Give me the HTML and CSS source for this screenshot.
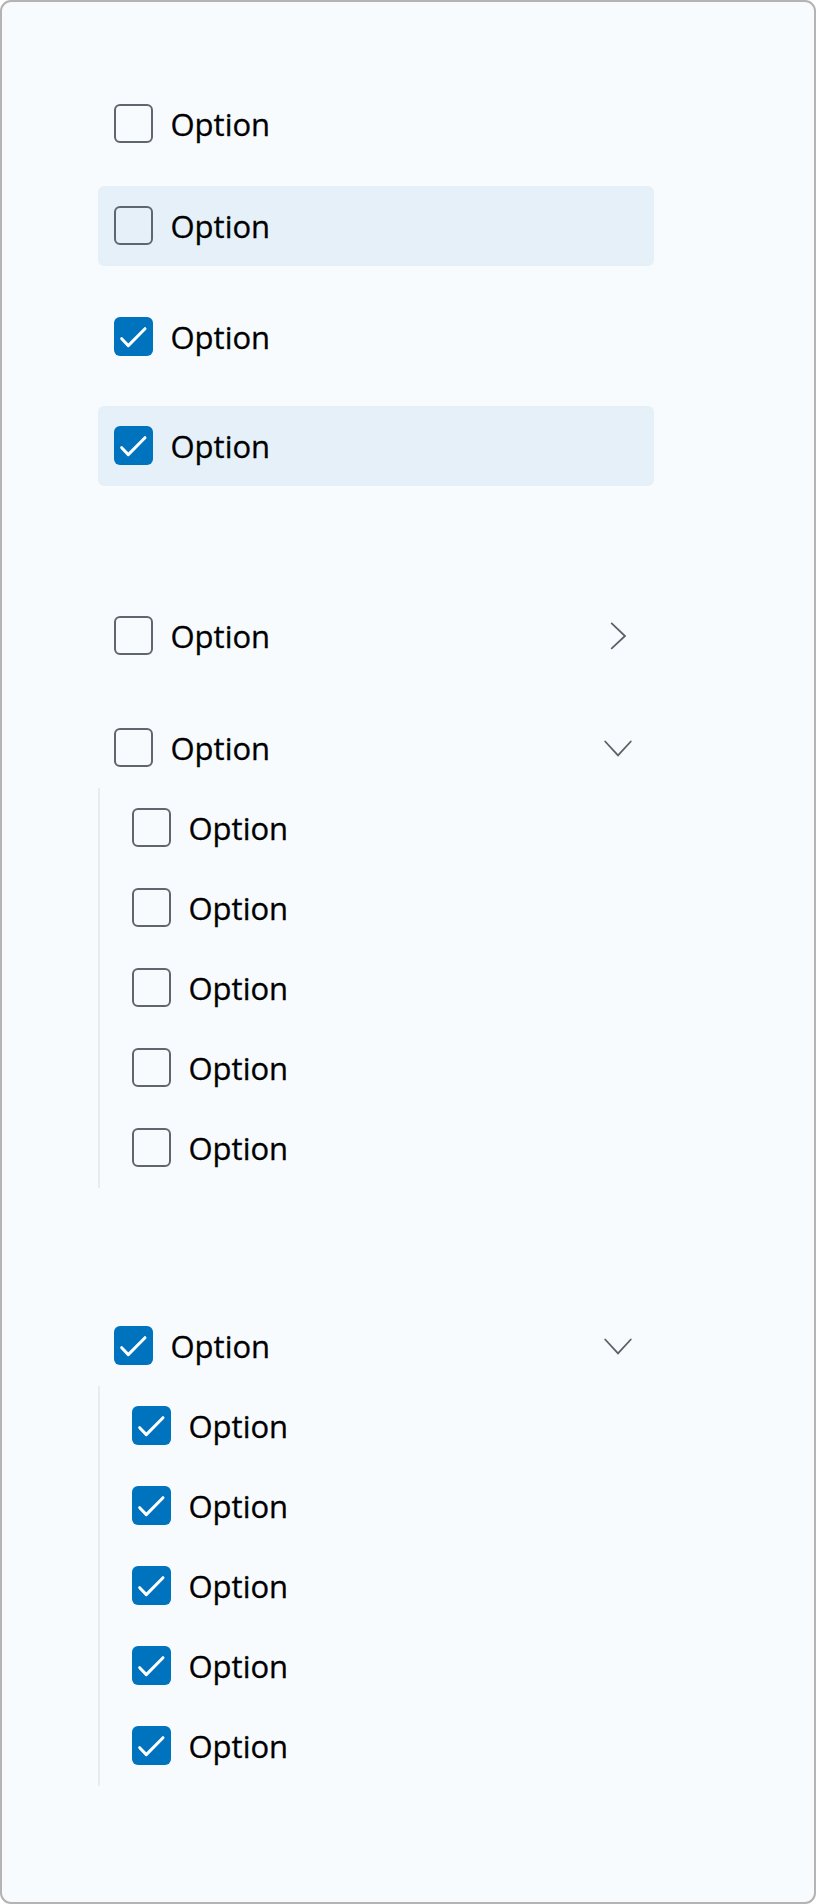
FILE: index.html
```html
<!DOCTYPE html>
<html>
<head>
<meta charset="utf-8">
<link rel="stylesheet" href="styles.css">
</head>
<body>
<div class="card">
  <div class="group g1">
    <div class="row r1"><span class="cb"></span><span class="label">Option</span></div>
    <div class="row hl r2"><span class="cb"></span><span class="label">Option</span></div>
    <div class="row r3"><span class="cb on"><svg viewBox="0 0 39 39"><polyline points="7.7,21.7 14.3,28.6 31,11.7"/></svg></span><span class="label">Option</span></div>
    <div class="row hl r4"><span class="cb on"><svg viewBox="0 0 39 39"><polyline points="7.7,21.7 14.3,28.6 31,11.7"/></svg></span><span class="label">Option</span></div>
  </div>

  <div class="group g2">
    <div class="row r5"><span class="cb"></span><span class="label">Option</span><span class="chev"><svg viewBox="0 0 40 40"><polyline points="13.7,7.4 27,20 13.7,32.4"/></svg></span></div>
    <div class="row r6"><span class="cb"></span><span class="label">Option</span><span class="chev"><svg viewBox="0 0 40 40"><polyline points="7.2,13.5 20,27.4 32.8,13.5"/></svg></span></div>
    <div class="children">
      <div class="row"><span class="cb"></span><span class="label">Option</span></div>
      <div class="row"><span class="cb"></span><span class="label">Option</span></div>
      <div class="row"><span class="cb"></span><span class="label">Option</span></div>
      <div class="row"><span class="cb"></span><span class="label">Option</span></div>
      <div class="row"><span class="cb"></span><span class="label">Option</span></div>
    </div>
  </div>

  <div class="group g3">
    <div class="row"><span class="cb on"><svg viewBox="0 0 39 39"><polyline points="7.7,21.7 14.3,28.6 31,11.7"/></svg></span><span class="label">Option</span><span class="chev"><svg viewBox="0 0 40 40"><polyline points="7.2,13.5 20,27.4 32.8,13.5"/></svg></span></div>
    <div class="children">
      <div class="row"><span class="cb on"><svg viewBox="0 0 39 39"><polyline points="7.7,21.7 14.3,28.6 31,11.7"/></svg></span><span class="label">Option</span></div>
      <div class="row"><span class="cb on"><svg viewBox="0 0 39 39"><polyline points="7.7,21.7 14.3,28.6 31,11.7"/></svg></span><span class="label">Option</span></div>
      <div class="row"><span class="cb on"><svg viewBox="0 0 39 39"><polyline points="7.7,21.7 14.3,28.6 31,11.7"/></svg></span><span class="label">Option</span></div>
      <div class="row"><span class="cb on"><svg viewBox="0 0 39 39"><polyline points="7.7,21.7 14.3,28.6 31,11.7"/></svg></span><span class="label">Option</span></div>
      <div class="row"><span class="cb on"><svg viewBox="0 0 39 39"><polyline points="7.7,21.7 14.3,28.6 31,11.7"/></svg></span><span class="label">Option</span></div>
    </div>
  </div>
</div>
</body>
</html>
```

FILE: styles.css
```css
html, body {
  margin: 0;
  padding: 0;
  background: #ffffff;
}

body {
  font-family: "Open Sans", "Noto Sans", "Liberation Sans", sans-serif;
}

.card {
  box-sizing: border-box;
  width: 816px;
  height: 1904px;
  border: 2.5px solid #b4b4b4;
  border-radius: 11px;
  background: #f7fbfe;
  padding: 81.5px 0 0 95.5px;
}

.group {
  width: 556px;
  display: flex;
  flex-direction: column;
}

.row {
  box-sizing: border-box;
  height: 80px;
  display: flex;
  align-items: center;
  padding: 0 16px;
  border-radius: 6px;
}

.hl {
  background: #e5f0f8;
}

.r2 { margin-top: 22px; }
.r3 { margin-top: 31px; }
.r4 { margin-top: 29px; }

.g2 { margin-top: 110px; }
.r6 { margin-top: 32px; }
.g3 { margin-top: 118px; }

.cb {
  box-sizing: border-box;
  flex: 0 0 39px;
  width: 39px;
  height: 39px;
  border: 2px solid #5f666d;
  border-radius: 6px;
  display: flex;
  align-items: center;
  justify-content: center;
}

.cb.on {
  border: none;
  background: #0073bf;
}

.cb svg {
  width: 39px;
  height: 39px;
  display: block;
}

.cb svg polyline {
  fill: none;
  stroke: #ffffff;
  stroke-width: 3;
  stroke-linecap: round;
  stroke-linejoin: round;
}

.label {
  margin-left: 18px;
  font-size: 31px;
  color: #000000;
  line-height: 40px;
  -webkit-text-stroke: 0.3px #000000;
}

.chev {
  margin-left: auto;
  width: 40px;
  height: 40px;
}

.chev svg {
  width: 40px;
  height: 40px;
  display: block;
}

.chev svg polyline {
  fill: none;
  stroke: #5b6167;
  stroke-width: 1.8;
  stroke-linecap: round;
  stroke-linejoin: miter;
}

.children {
  border-left: 2px solid #e8ecf0;
  padding-left: 16px;
  display: flex;
  flex-direction: column;
}
```
